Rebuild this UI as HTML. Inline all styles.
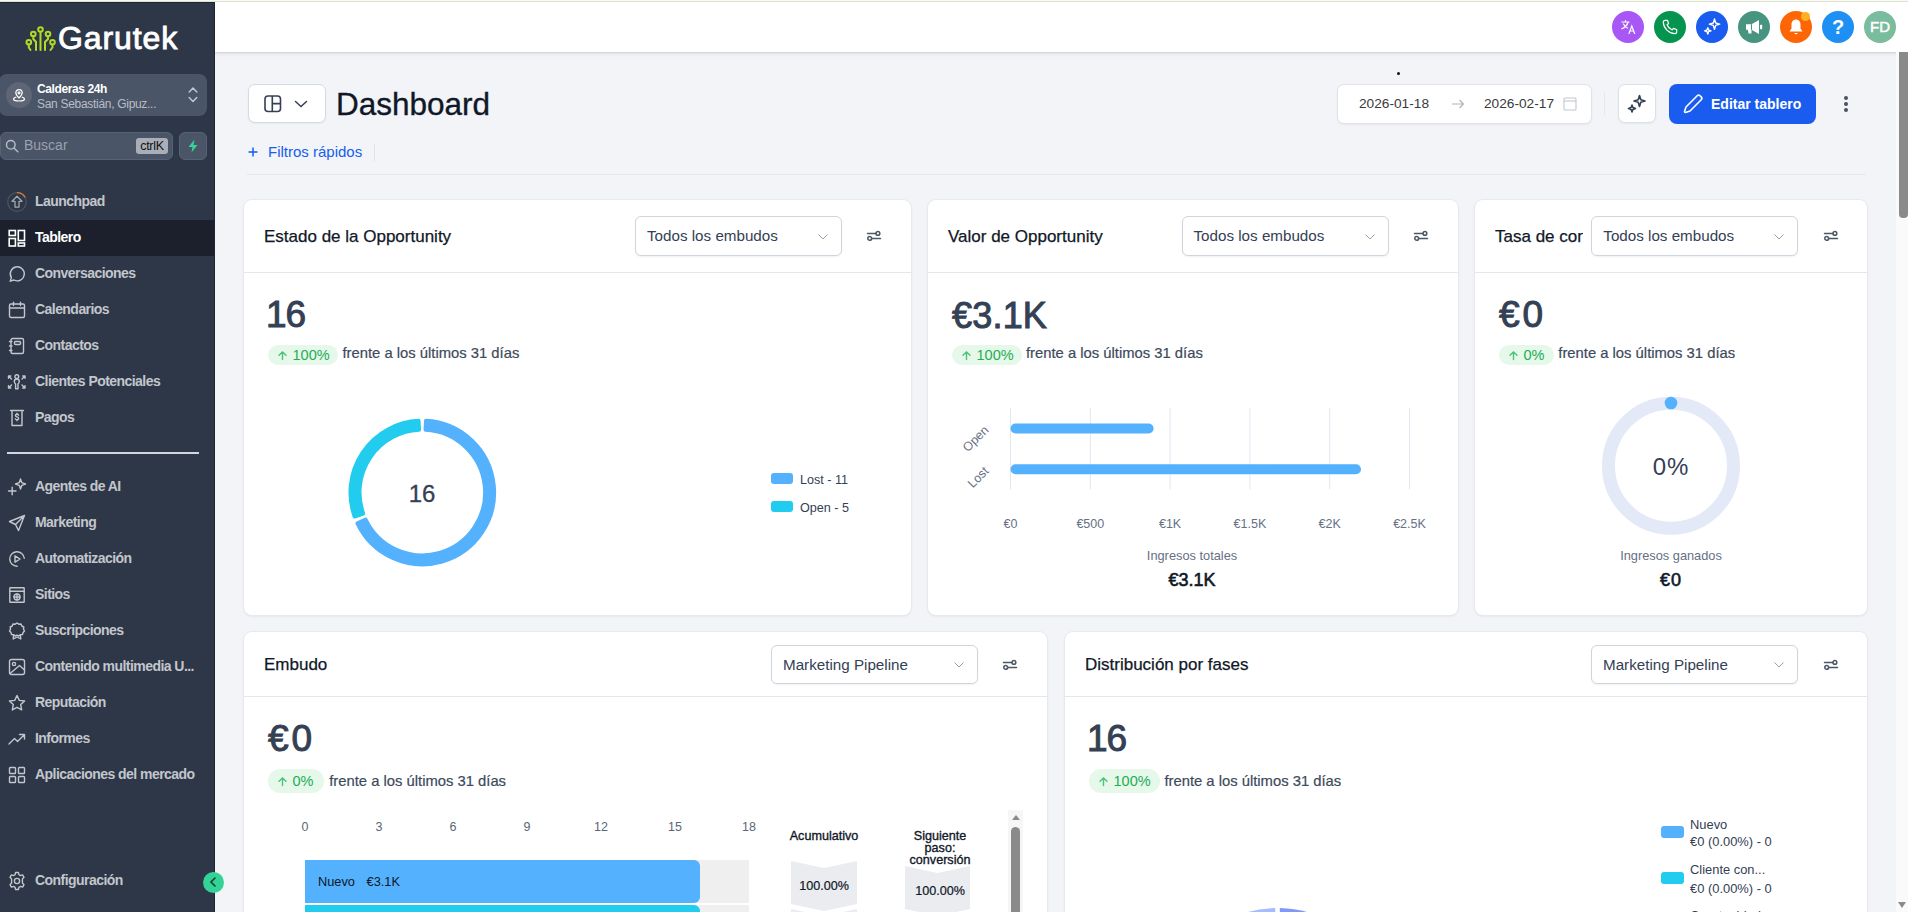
<!DOCTYPE html>
<html><head><meta charset="utf-8">
<style>
*{box-sizing:border-box;margin:0;padding:0}
html,body{width:1908px;height:912px;overflow:hidden;background:#f2f4f7;font-family:"Liberation Sans",sans-serif;color:#101828}
.a{position:absolute}
svg{position:absolute;overflow:visible}
#topline{left:0;top:0;width:1908px;height:2px;background:linear-gradient(#f8fcf0 0,#f8fcf0 1px,#dfe3d5 1px,#dfe3d5 2px)}
#side{left:0;top:2px;width:215px;height:910px;background:#2d3748;border-right:1px solid #1f2636;border-top:1px solid #1e2535}
#hdr{left:215px;top:2px;width:1693px;height:50px;background:#fff;box-shadow:0 1px 1px rgba(16,24,40,.08),0 2px 4px rgba(16,24,40,.08)}
.nav{position:absolute;left:0;width:214px;height:36px;color:#c3c6cc;font-weight:bold;font-size:14px;letter-spacing:-0.55px;line-height:36px}
.nav span{position:absolute;left:35px;top:-0.9px;white-space:nowrap}
.nav svg{left:8px;top:9px}
.nav.act{background:#1b202c;color:#fff}
.card{position:absolute;background:#fff;border-radius:8px;box-shadow:0 0 0 1px #e7e9ee,0 1px 3px rgba(16,24,40,.10)}
.chd{position:absolute;left:0;right:0;top:0;border-bottom:1px solid #e4e7ec}
.ctitle{position:absolute;left:20px;font-size:17px;color:#101828;white-space:nowrap;line-height:20px;-webkit-text-stroke:0.25px #101828}
.dd{position:absolute;height:40px;width:207px;border:1px solid #d0d5dd;border-radius:6px;background:#fff;box-shadow:0 1px 2px rgba(16,24,40,.06)}
.dd span{position:absolute;left:11px;top:0;line-height:38px;font-size:15.2px;color:#344054;white-space:nowrap}
.dd svg{right:13px;top:15px}
.flt{position:absolute}
.big{position:absolute;left:24px;font-size:37px;font-weight:normal;-webkit-text-stroke:1px #344054;color:#344054;line-height:40px;white-space:nowrap}
.badge{position:absolute;left:24px;height:20px;border-radius:10px;background:#e6f8ea;color:#22ad55;font-size:14.5px;line-height:20px;white-space:nowrap}
.badge svg{left:9px;top:5px}
.badge span{position:absolute;left:23px;top:0}
.vs{position:absolute;font-size:14.8px;color:#3d4a5c;-webkit-text-stroke:0.2px #3d4a5c;white-space:nowrap;line-height:20px}
.t13{position:absolute;font-size:13px;color:#667085;white-space:nowrap;line-height:16px}
</style></head>
<body>
<div id="topline" class="a"></div>
<div id="side" class="a">
</div>
<!-- logo -->
<svg width="32" height="26" viewBox="0 0 32 26" style="left:26px;top:26px">
<g stroke="#afdb24" stroke-width="2" fill="none" stroke-linecap="round">
<circle cx="14.5" cy="3.5" r="2.3"/><path d="M14.5 5.8 V24"/>
<circle cx="7.3" cy="8" r="2.3"/><path d="M7.3 10.3 V13 L10 16 V24"/>
<circle cx="22" cy="8" r="2.3"/><path d="M22 10.3 V13 L19 16 V24"/>
<circle cx="2.8" cy="16.3" r="2.3"/><path d="M2.8 18.6 V21.5 L4.5 24"/>
<circle cx="26.5" cy="16.3" r="2.3"/><path d="M26.5 18.6 V21.5 L24.5 24"/>
</g></svg>
<div class="a" style="left:58px;top:20px;font-size:32px;line-height:36px;color:#fff;letter-spacing:0.9px;-webkit-text-stroke:0.9px #fff;white-space:nowrap">Garutek</div>
<!-- location -->
<div class="a" style="left:-1px;top:74px;width:208px;height:42px;background:#4a5568;border-radius:8px"></div>
<div class="a" style="left:6px;top:82px;width:26px;height:26px;border-radius:13px;background:#5e6676"></div>
<svg width="14" height="14" viewBox="0 0 14 14" style="left:12px;top:88px"><g stroke="#fff" stroke-width="1.2" fill="none"><path d="M7 10 C5 8 3.8 6.5 3.8 4.8 A3.2 3.2 0 0 1 10.2 4.8 C10.2 6.5 9 8 7 10 Z"/><circle cx="7" cy="4.8" r="1"/><path d="M4.3 9 C2.5 9.5 1.5 10.2 1.5 11 C1.5 12.2 4 13 7 13 C10 13 12.5 12.2 12.5 11 C12.5 10.2 11.5 9.5 9.7 9"/></g></svg>
<div class="a" style="left:37px;top:82px;font-size:12px;font-weight:bold;color:#fff;letter-spacing:-0.4px;line-height:14px;white-space:nowrap">Calderas 24h</div>
<div class="a" style="left:37px;top:96.5px;font-size:12px;color:#b9bdc6;letter-spacing:-0.3px;line-height:14px;white-space:nowrap">San Sebastián, Gipuz...</div>
<svg width="10" height="17" viewBox="0 0 10 17" style="left:188px;top:86px"><path d="M1.2 6 L5 2 L8.8 6 M1.2 11.5 L5 15.5 L8.8 11.5" stroke="#c3c6cc" stroke-width="1.5" fill="none" stroke-linecap="round" stroke-linejoin="round"/></svg>
<!-- search -->
<div class="a" style="left:0;top:132px;width:173px;height:28px;background:#4a5568;border:1px solid #586275;border-radius:6px"></div>
<svg width="14" height="14" viewBox="0 0 14 14" style="left:5px;top:139px"><g stroke="#b9bdc6" stroke-width="1.4" fill="none" stroke-linecap="round"><circle cx="5.8" cy="5.8" r="4.3"/><path d="M9 9 L12.8 12.8"/></g></svg>
<div class="a" style="left:24px;top:137px;font-size:14px;color:#9ba1ad;line-height:17px;white-space:nowrap">Buscar</div>
<div class="a" style="left:136px;top:138px;width:32px;height:16px;background:#a9aeb8;border-radius:3px;font-size:12.5px;color:#111;line-height:16px;text-align:center;letter-spacing:-0.3px">ctrlK</div>
<div class="a" style="left:179px;top:132px;width:28px;height:28px;background:#4a5568;border:1px solid #586275;border-radius:6px"></div>
<svg width="12" height="14" viewBox="0 0 12 14" style="left:187px;top:139px"><path d="M7.5 0.5 L1.5 8 H5.5 L4.5 13.5 L10.5 6 H6.5 Z" fill="#37d399"/></svg>
<div class="a" style="left:7px;top:452px;width:192px;height:1.5px;background:#d3d6dc"></div>
<div class="nav" style="top:184px"><svg width="20" height="20" viewBox="0 0 20 20" style="left:7px;top:8px"><circle cx="10" cy="10" r="9.3" stroke="#4d5566" stroke-width="1.2" fill="none"/><path d="M10 0.7 A9.3 9.3 0 0 1 18.1 5.4" stroke="#e0792a" stroke-width="1.3" fill="none"/><path d="M10 4.3 L15 9.3 H12 V15.2 H8 V9.3 H5 Z" stroke="#a3a7b0" stroke-width="1.3" fill="none" stroke-linejoin="round"/></svg><span>Launchpad</span></div>
<div class="nav act" style="top:220px"><svg width="18" height="18" viewBox="0 0 18 18"><g stroke="#fff" stroke-width="1.6" fill="none"><rect x="1.2" y="1.5" width="6.2" height="5"/><rect x="10.3" y="1.5" width="6.2" height="10"/><rect x="1.2" y="9.5" width="6.2" height="7.5"/><rect x="10.3" y="14" width="6.2" height="3"/></g></svg><span>Tablero</span></div>
<div class="nav" style="top:256px"><svg width="18" height="18" viewBox="0 0 18 18"><path d="M2.2 16.2 L3.4 12.6 A7 7 0 1 1 6 15 Z" stroke="#c3c6cc" stroke-width="1.4" fill="none" stroke-linecap="round" stroke-linejoin="round"/></svg><span>Conversaciones</span></div>
<div class="nav" style="top:292px"><svg width="18" height="18" viewBox="0 0 18 18"><g stroke="#c3c6cc" stroke-width="1.4" fill="none" stroke-linecap="round" stroke-linejoin="round"><rect x="1.5" y="3" width="15" height="13.5" rx="1.5"/><path d="M1.5 7 H16.5 M5.5 1.3 V4.5 M12.5 1.3 V4.5"/></g></svg><span>Calendarios</span></div>
<div class="nav" style="top:328px"><svg width="18" height="18" viewBox="0 0 18 18"><g stroke="#c3c6cc" stroke-width="1.4" fill="none" stroke-linecap="round" stroke-linejoin="round"><rect x="3" y="1.5" width="12.5" height="15" rx="1.5"/><rect x="6.5" y="4.5" width="6" height="3" rx="1"/><path d="M1.5 4.5 H4 M1.5 9 H4 M1.5 13.5 H4"/></g></svg><span>Contactos</span></div>
<div class="nav" style="top:364px"><svg width="18" height="18" viewBox="0 0 18 18"><g transform="translate(0 1)" stroke="#c3c6cc" stroke-width="1.4" fill="none" stroke-linecap="round" stroke-linejoin="round"><circle cx="8.8" cy="2.6" r="1.9"/><path d="M8.8 5 C7.2 5 6.3 6.2 6.3 7.6 C6.3 8.8 7.1 9.6 7.6 10 V14.8 H10 V10 C10.5 9.6 11.3 8.8 11.3 7.6 C11.3 6.2 10.4 5 8.8 5 Z"/><path d="M0.5 2 L3.5 5 M0.5 2 H2.8 M0.5 2 V4.3 M17 2 L14 5 M17 2 H14.7 M17 2 V4.3 M0.5 14 L3.5 11 M0.5 14 H2.8 M0.5 14 V11.7 M17 14 L14 11 M17 14 H14.7 M17 14 V11.7"/></g></svg><span>Clientes Potenciales</span></div>
<div class="nav" style="top:400px"><svg width="18" height="18" viewBox="0 0 18 18"><g stroke="#c3c6cc" stroke-width="1.4" fill="none" stroke-linecap="round" stroke-linejoin="round"><path d="M2.5 1.5 H15.5 M4 1.5 V16.5 H14 V1.5"/><path d="M10.6 6.2 C10.2 5.5 9.6 5.3 9 5.3 C8 5.3 7.4 5.9 7.4 6.6 C7.4 8.4 10.6 7.5 10.6 9.4 C10.6 10.2 9.9 10.8 9 10.8 C8.2 10.8 7.6 10.4 7.3 9.8 M9 4.3 V5.3 M9 10.8 V11.8"/></g></svg><span>Pagos</span></div>
<div class="nav" style="top:469px"><svg width="20" height="20" viewBox="0 0 20 20" style="left:7px;top:8px"><g stroke="#c3c6cc" stroke-width="1.4" fill="none" stroke-linecap="round" stroke-linejoin="round"><path d="M1.5 14 H9 M5.2 10.2 V17.8"/><path d="M13.5 2 L14.8 5.7 L18.5 7 L14.8 8.3 L13.5 12 L12.2 8.3 L8.5 7 L12.2 5.7 Z"/></g></svg><span>Agentes de AI</span></div>
<div class="nav" style="top:505px"><svg width="18" height="18" viewBox="0 0 18 18"><path d="M16.5 1.5 L1.5 7.5 L7.5 10.5 L10.5 16.5 Z M16.5 1.5 L7.5 10.5" stroke="#c3c6cc" stroke-width="1.4" fill="none" stroke-linecap="round" stroke-linejoin="round"/></svg><span>Marketing</span></div>
<div class="nav" style="top:541px"><svg width="18" height="18" viewBox="0 0 18 18"><g stroke="#c3c6cc" stroke-width="1.4" fill="none" stroke-linecap="round" stroke-linejoin="round"><path d="M16.3 8.3 A7.3 7.3 0 1 0 9.2 16.3"/><path d="M7 5.8 L12 9 L7 12.2 Z"/></g></svg><span>Automatización</span></div>
<div class="nav" style="top:577px"><svg width="18" height="18" viewBox="0 0 18 18"><g stroke="#c3c6cc" stroke-width="1.4" fill="none" stroke-linecap="round" stroke-linejoin="round"><rect x="1.8" y="1.8" width="14.4" height="14.4" rx="0.5"/><path d="M1.8 5.2 H16.2"/><circle cx="9" cy="11" r="3"/><path d="M6 11 H12 M9 8 V14"/></g></svg><span>Sitios</span></div>
<div class="nav" style="top:613px"><svg width="18" height="18" viewBox="0 0 18 18"><g stroke="#c3c6cc" stroke-width="1.4" fill="none" stroke-linecap="round" stroke-linejoin="round"><path d="M9 1 L10.8 2.2 L13 2 L13.8 4 L15.8 5 L15.5 7.2 L16.5 9 L15 10.6 L14.5 12.5 L12.3 12.8 L10.8 14 L9 13.2 L7.2 14 L5.7 12.8 L3.5 12.5 L3 10.6 L1.5 9 L2.5 7.2 L2.2 5 L4.2 4 L5 2 L7.2 2.2 Z"/><path d="M5.7 12.8 L5.2 17 L9 15 L12.8 17 L12.3 12.8"/></g></svg><span>Suscripciones</span></div>
<div class="nav" style="top:649px"><svg width="18" height="18" viewBox="0 0 18 18"><g stroke="#c3c6cc" stroke-width="1.4" fill="none" stroke-linecap="round" stroke-linejoin="round"><rect x="1.5" y="1.5" width="15" height="15" rx="2"/><circle cx="6" cy="6" r="1.6"/><path d="M2 15.5 L11.5 7.5 L16.5 12"/></g></svg><span>Contenido multimedia U...</span></div>
<div class="nav" style="top:685px"><svg width="18" height="18" viewBox="0 0 18 18"><path d="M9 1.5 L11.3 6.4 L16.6 7 L12.7 10.6 L13.7 15.9 L9 13.3 L4.3 15.9 L5.3 10.6 L1.4 7 L6.7 6.4 Z" stroke="#c3c6cc" stroke-width="1.4" fill="none" stroke-linecap="round" stroke-linejoin="round"/></svg><span>Reputación</span></div>
<div class="nav" style="top:721px"><svg width="18" height="18" viewBox="0 0 18 18"><g stroke="#c3c6cc" stroke-width="1.4" fill="none" stroke-linecap="round" stroke-linejoin="round"><path d="M1 14 L6.5 8.5 L9.5 11.5 L16.5 4.5 M11.5 4.5 H16.5 V9"/></g></svg><span>Informes</span></div>
<div class="nav" style="top:757px"><svg width="18" height="18" viewBox="0 0 18 18"><g stroke="#c3c6cc" stroke-width="1.4" fill="none" stroke-linecap="round" stroke-linejoin="round"><rect x="1.5" y="1.5" width="6" height="6" rx="0.8"/><rect x="10.5" y="1.5" width="6" height="6" rx="0.8"/><rect x="1.5" y="10.5" width="6" height="6" rx="0.8"/><rect x="10.5" y="10.5" width="6" height="6" rx="0.8"/></g></svg><span>Aplicaciones del mercado</span></div>
<div class="nav" style="top:863px"><svg width="20" height="20" viewBox="0 0 20 20" style="left:7px;top:8px"><g stroke="#c3c6cc" stroke-width="1.4" fill="none" stroke-linecap="round" stroke-linejoin="round"><path d="M8.6 1.5 H11.4 L11.9 3.7 L13.5 4.6 L15.6 3.9 L17 6.3 L15.4 7.9 V9.8 V12.1 L17 13.7 L15.6 16.1 L13.5 15.4 L11.9 16.3 L11.4 18.5 H8.6 L8.1 16.3 L6.5 15.4 L4.4 16.1 L3 13.7 L4.6 12.1 V7.9 L3 6.3 L4.4 3.9 L6.5 4.6 L8.1 3.7 Z"/><circle cx="10" cy="10" r="2.6"/></g></svg><span>Configuración</span></div>

<div class="a" style="left:203px;top:872px;width:21px;height:21px;border-radius:11px;background:#33d296"></div>
<svg width="8" height="10" viewBox="0 0 8 10" style="left:209px;top:877px"><path d="M6 1 L2 5 L6 9" stroke="#1b3a30" stroke-width="1.6" fill="none" stroke-linecap="round"/></svg>

<!-- header -->
<div id="hdr" class="a"></div>
<div class="a" style="left:1896px;top:52px;width:12px;height:860px;background:#fafafa"></div>
<div class="a" style="left:1899px;top:52px;width:9px;height:166px;background:#8a8a8a;border-radius:0 0 4px 4px"></div>
<svg width="10" height="8" viewBox="0 0 10 8" style="left:1897px;top:901px"><path d="M1 1 H9 L5 7 Z" fill="#8a8a8a"/></svg>
<!-- header icons -->
<div class="a" style="left:1612px;top:11px;width:32px;height:32px;border-radius:16px;background:#a857f6"></div>
<div class="a" style="left:1654px;top:11px;width:32px;height:32px;border-radius:16px;background:#05944f"></div>
<div class="a" style="left:1696px;top:11px;width:32px;height:32px;border-radius:16px;background:#1a5cf0"></div>
<div class="a" style="left:1738px;top:11px;width:32px;height:32px;border-radius:16px;background:#479580"></div>
<div class="a" style="left:1780px;top:11px;width:32px;height:32px;border-radius:16px;background:#fe6505"></div>
<div class="a" style="left:1822px;top:11px;width:32px;height:32px;border-radius:16px;background:#1e8ff3"></div>
<div class="a" style="left:1864px;top:11px;width:32px;height:32px;border-radius:16px;background:#79bc9e"></div>
<div class="a" style="left:1801px;top:12px;width:9px;height:9px;border-radius:5px;background:#fdb022"></div>
<!-- translate -->
<svg width="16" height="14" viewBox="0 0 16 14" style="left:1621px;top:20px"><g stroke="#fff" stroke-width="1.2" fill="none" stroke-linecap="round"><path d="M0.8 2 H8 M4.5 0.5 V2 M7 2 C6.3 5 4 7.5 0.8 8.8 M2.5 4 C3.5 6 5 7.3 6.5 8"/><path d="M8 13.5 L10.8 6 L13.6 13.5 M9 11 H12.6"/></g></svg>
<!-- phone -->
<svg width="16" height="16" viewBox="0 0 16 16" style="left:1662px;top:19px"><path d="M3.2 1.3 L5.5 1.3 L6.6 4.6 L5 5.8 C5.8 7.8 8.2 10.2 10.2 11 L11.4 9.4 L14.7 10.5 V12.8 C14.7 13.8 13.9 14.7 12.8 14.7 C6.8 14.4 1.6 9.2 1.3 3.2 C1.3 2.1 2.2 1.3 3.2 1.3 Z" stroke="#fff" stroke-width="1.2" fill="none" stroke-linejoin="round"/></svg>
<!-- sparkle -->
<svg width="18" height="18" viewBox="0 0 18 18" style="left:1703px;top:18px"><g stroke="#fff" stroke-width="1.4" fill="none" stroke-linejoin="round"><path d="M11.5 1 L12.7 5 L16.7 6.2 L12.7 7.4 L11.5 11.4 L10.3 7.4 L6.3 6.2 L10.3 5 Z"/><path d="M4.8 9.6 L5.6 12 L8 12.8 L5.6 13.6 L4.8 16 L4 13.6 L1.6 12.8 L4 12 Z"/></g></svg>
<!-- megaphone -->
<svg width="18" height="16" viewBox="0 0 18 16" style="left:1745px;top:19px"><path d="M1 5.2 H6.5 L14 1 V15 L6.5 10.8 V14.5 H3.5 L2.8 10.8 H1 Z" fill="#fff"/><rect x="15" y="5.8" width="2.2" height="4.4" rx="0.6" fill="#fff"/><path d="M6.5 5.2 V10.8" stroke="#479580" stroke-width="1"/></svg>
<!-- bell -->
<svg width="16" height="18" viewBox="0 0 16 18" style="left:1788px;top:18px"><path d="M8 1.5 C5.2 1.5 3.5 3.7 3.5 6.5 V10.5 L1.5 13.5 H14.5 L12.5 10.5 V6.5 C12.5 3.7 10.8 1.5 8 1.5 Z" fill="#fff"/><path d="M6.3 15 A1.8 1.8 0 0 0 9.7 15 Z" fill="#fff"/></svg>
<div class="a" style="left:1822px;top:15px;width:32px;height:24px;font-size:20px;font-weight:bold;color:#fff;text-align:center;line-height:24px">?</div>
<div class="a" style="left:1864px;top:17px;width:32px;height:20px;font-size:15px;-webkit-text-stroke:0.5px #fff;color:#fff;text-align:center;line-height:20px;letter-spacing:0px">FD</div>
<!-- page header -->
<div class="a" style="left:248px;top:84px;width:78px;height:39px;background:#fff;border:1px solid #d5d9e0;border-radius:7px;box-shadow:0 1px 2px rgba(16,24,40,.05)"></div>
<svg width="18" height="18" viewBox="0 0 18 18" style="left:264px;top:95px"><g stroke="#344054" stroke-width="1.6" fill="none"><rect x="1" y="1" width="15.5" height="15.5" rx="3"/><path d="M8.3 1 V16.5 M8.3 8.6 H16.5"/></g></svg>
<svg width="14" height="8" viewBox="0 0 14 8" style="left:294px;top:100px"><path d="M1.5 1.5 L7 6.5 L12.5 1.5" stroke="#344054" stroke-width="1.5" fill="none" stroke-linecap="round"/></svg>
<div class="a" style="left:336px;top:84px;font-size:31.5px;line-height:40px;color:#101828;-webkit-text-stroke:0.35px #101828;white-space:nowrap">Dashboard</div>
<svg width="10" height="10" viewBox="0 0 10 10" style="left:248px;top:147px"><path d="M5 0.5 V9.5 M0.5 5 H9.5" stroke="#155eef" stroke-width="1.5"/></svg>
<div class="a" style="left:268px;top:143px;font-size:15px;line-height:18px;color:#155eef;white-space:nowrap">Filtros rápidos</div>
<div class="a" style="left:374px;top:144px;width:1px;height:17px;background:#dfe2e7"></div>
<div class="a" style="left:247px;top:174px;width:1619px;height:1px;background:#e4e7ec"></div>
<div class="a" style="left:1397px;top:72px;width:3px;height:3px;border-radius:2px;background:#111"></div>
<!-- date range -->
<div class="a" style="left:1336.5px;top:84px;width:255px;height:39.5px;background:#fff;border:1px solid #e0e3e8;border-radius:7px;box-shadow:0 1px 2px rgba(16,24,40,.05)"></div>
<div class="a" style="left:1359px;top:95px;font-size:13.7px;line-height:17px;color:#3a3a3a;white-space:nowrap">2026-01-18</div>
<svg width="14" height="10" viewBox="0 0 14 10" style="left:1451px;top:99px"><path d="M1 5 H12.5 M8.5 1 L12.5 5 L8.5 9" stroke="#b0b3b8" stroke-width="1.2" fill="none"/></svg>
<div class="a" style="left:1484px;top:95px;font-size:13.7px;line-height:17px;color:#3a3a3a;white-space:nowrap">2026-02-17</div>
<svg width="14" height="14" viewBox="0 0 14 14" style="left:1563px;top:97px"><g stroke="#c2c5ca" stroke-width="1.1" fill="none"><rect x="1" y="1" width="12" height="12" rx="1"/><path d="M1 4 H13"/></g></svg>
<div class="a" style="left:1604px;top:92px;width:1px;height:23px;background:#e4e7ec"></div>
<div class="a" style="left:1618px;top:84px;width:38px;height:39px;background:#fff;border:1px solid #dcdfe4;border-radius:7px;box-shadow:0 1px 2px rgba(16,24,40,.05)"></div>
<svg width="20" height="20" viewBox="0 0 20 20" style="left:1627px;top:94px"><g stroke="#344054" stroke-width="1.6" fill="none" stroke-linejoin="round"><path d="M12.5 1.5 L13.8 5.7 L18 7 L13.8 8.3 L12.5 12.5 L11.2 8.3 L7 7 L11.2 5.7 Z"/><path d="M5 11 L5.9 13.6 L8.5 14.5 L5.9 15.4 L5 18 L4.1 15.4 L1.5 14.5 L4.1 13.6 Z"/></g></svg>
<div class="a" style="left:1669px;top:84px;width:147px;height:40px;background:#1a5cf0;border-radius:8px"></div>
<svg width="20" height="20" viewBox="0 0 20 20" style="left:1683px;top:94px"><path d="M14.2 1.8 C15 1 16.3 1 17.1 1.8 L18.2 2.9 C19 3.7 19 5 18.2 5.8 L7 17 L2.5 18.5 C1.9 18.7 1.3 18.1 1.5 17.5 L3 13 Z" stroke="#fff" stroke-width="1.6" fill="none" stroke-linejoin="round"/></svg>
<div class="a" style="left:1711px;top:96px;font-size:14px;font-weight:bold;line-height:17px;color:#fff;white-space:nowrap">Editar tablero</div>
<div class="a" style="left:1844px;top:96px;width:4px;height:4px;border-radius:2px;background:#4a5160"></div>
<div class="a" style="left:1844px;top:102px;width:4px;height:4px;border-radius:2px;background:#4a5160"></div>
<div class="a" style="left:1844px;top:108px;width:4px;height:4px;border-radius:2px;background:#4a5160"></div>
<div class="card" style="left:244px;top:200px;width:667px;height:415px">
<div class="chd" style="height:73px"></div>
<div class="ctitle" style="top:26.5px">Estado de la Opportunity</div>
<div class="dd" style="left:391px;top:16px;height:40px"><span>Todos los embudos</span><svg width="10" height="6" viewBox="0 0 10 6" style="top:16.5px"><path d="M0.5 0.5 L5 5 L9.5 0.5" stroke="#98a2b3" stroke-width="1" fill="none"/></svg></div>
<svg width="14" height="10" viewBox="0 0 14 10" style="left:623px;top:31px"><g stroke="#4b5866" stroke-width="1.5" fill="none" stroke-linecap="round"><path d="M0.5 2.4 H8.8 M5.2 7.4 H13.5"/><circle cx="10.9" cy="2.4" r="1.9"/><circle cx="2.7" cy="7.4" r="1.9"/></g></svg>
<div class="big" style="top:95px;left:22px;letter-spacing:-1px">16</div>
<div class="badge" style="left:24px;top:145px;width:70px;height:20px;line-height:20px;border-radius:10.0px"><svg width="9" height="9" viewBox="0 0 9 9" style="left:10px;top:6.0px"><path d="M4.5 8.5 V1 M1 4.3 L4.5 1 L8 4.3" stroke="#4cc27a" stroke-width="1.4" fill="none" stroke-linecap="round"/></svg><span style="left:24.5px">100%</span></div>
<div class="vs" style="left:98.5px;top:143px">frente a los últimos 31 días</div>
<svg width="667" height="415" style="left:0;top:0"><g stroke-width="4.0" stroke-linejoin="round"><path d="M182.01 220.80 A71.8 71.8 0 1 1 113.47 323.37 L121.60 319.50 A62.8 62.8 0 1 0 181.54 229.78 Z" fill="#53b1fd" stroke="#53b1fd"/><path d="M110.63 316.51 A71.8 71.8 0 0 1 174.59 220.80 L175.06 229.78 A62.8 62.8 0 0 0 119.12 313.50 Z" fill="#22ccee" stroke="#22ccee"/></g></svg>
<div class="a" style="left:128px;top:279.5px;width:100px;text-align:center;font-size:24px;-webkit-text-stroke:0.3px #344054;line-height:28px;color:#344054">16</div>
<div class="a" style="left:527px;top:273px;width:22px;height:11px;border-radius:3px;background:#53b1fd"></div>
<div class="t13" style="left:556px;top:271.6px;font-size:12.6px;color:#344054">Lost - 11</div>
<div class="a" style="left:527px;top:301px;width:22px;height:11px;border-radius:3px;background:#22ccee"></div>
<div class="t13" style="left:556px;top:299.5px;font-size:12.6px;color:#344054">Open - 5</div>
</div>
<div class="card" style="left:928px;top:200px;width:529.5px;height:415px">
<div class="chd" style="height:73px"></div>
<div class="ctitle" style="top:26.5px">Valor de Opportunity</div>
<div class="dd" style="left:253.5px;top:16px;height:40px"><span>Todos los embudos</span><svg width="10" height="6" viewBox="0 0 10 6" style="top:16.5px"><path d="M0.5 0.5 L5 5 L9.5 0.5" stroke="#98a2b3" stroke-width="1" fill="none"/></svg></div>
<svg width="14" height="10" viewBox="0 0 14 10" style="left:486px;top:31px"><g stroke="#4b5866" stroke-width="1.5" fill="none" stroke-linecap="round"><path d="M0.5 2.4 H8.8 M5.2 7.4 H13.5"/><circle cx="10.9" cy="2.4" r="1.9"/><circle cx="2.7" cy="7.4" r="1.9"/></g></svg>
<div class="big" style="top:95.5px;letter-spacing:0.2px;font-size:36px">€3.1K</div>
<div class="badge" style="left:24px;top:145px;width:70px;height:20px;line-height:20px;border-radius:10.0px"><svg width="9" height="9" viewBox="0 0 9 9" style="left:10px;top:6.0px"><path d="M4.5 8.5 V1 M1 4.3 L4.5 1 L8 4.3" stroke="#4cc27a" stroke-width="1.4" fill="none" stroke-linecap="round"/></svg><span style="left:24.5px">100%</span></div>
<div class="vs" style="left:98px;top:143px">frente a los últimos 31 días</div>
<svg width="529.5" height="415" style="left:0;top:0"><line x1="82.5" y1="208" x2="82.5" y2="289.5" stroke="#e4e7f2" stroke-width="1"/><line x1="162.3" y1="208" x2="162.3" y2="289.5" stroke="#e4e7f2" stroke-width="1"/><line x1="242.1" y1="208" x2="242.1" y2="289.5" stroke="#e4e7f2" stroke-width="1"/><line x1="321.9" y1="208" x2="321.9" y2="289.5" stroke="#e4e7f2" stroke-width="1"/><line x1="401.7" y1="208" x2="401.7" y2="289.5" stroke="#e4e7f2" stroke-width="1"/><line x1="481.5" y1="208" x2="481.5" y2="289.5" stroke="#e4e7f2" stroke-width="1"/><line x1="87.5" y1="228.5" x2="220.6" y2="228.5" stroke="#53b1fd" stroke-width="10" stroke-linecap="round"/><line x1="87.5" y1="269.3" x2="428" y2="269.3" stroke="#53b1fd" stroke-width="10" stroke-linecap="round"/></svg>
<div class="t13" style="left:42.5px;top:316px;width:80px;text-align:center;font-size:12.5px">€0</div>
<div class="t13" style="left:122.3px;top:316px;width:80px;text-align:center;font-size:12.5px">€500</div>
<div class="t13" style="left:202.1px;top:316px;width:80px;text-align:center;font-size:12.5px">€1K</div>
<div class="t13" style="left:281.9px;top:316px;width:80px;text-align:center;font-size:12.5px">€1.5K</div>
<div class="t13" style="left:361.7px;top:316px;width:80px;text-align:center;font-size:12.5px">€2K</div>
<div class="t13" style="left:441.5px;top:316px;width:80px;text-align:center;font-size:12.5px">€2.5K</div>
<div class="t13" style="right:471px;top:220px;transform-origin:100% 50%;transform:rotate(-45deg);font-size:12.5px">Open</div>
<div class="t13" style="right:471px;top:261px;transform-origin:100% 50%;transform:rotate(-45deg);font-size:12.5px">Lost</div>
<div class="t13" style="left:164px;top:348px;width:200px;text-align:center;font-size:12.8px">Ingresos totales</div>
<div class="a" style="left:164px;top:370px;width:200px;text-align:center;font-size:18px;-webkit-text-stroke:0.6px #101828;line-height:20px;color:#101828">€3.1K</div>
</div>
<div class="card" style="left:1475px;top:200px;width:392px;height:415px">
<div class="chd" style="height:73px"></div>
<div class="ctitle" style="top:26.5px;width:88px;overflow:hidden">Tasa de conversión</div>
<div class="dd" style="left:116.3px;top:16px;height:40px"><span>Todos los embudos</span><svg width="10" height="6" viewBox="0 0 10 6" style="top:16.5px"><path d="M0.5 0.5 L5 5 L9.5 0.5" stroke="#98a2b3" stroke-width="1" fill="none"/></svg></div>
<svg width="14" height="10" viewBox="0 0 14 10" style="left:349px;top:31px"><g stroke="#4b5866" stroke-width="1.5" fill="none" stroke-linecap="round"><path d="M0.5 2.4 H8.8 M5.2 7.4 H13.5"/><circle cx="10.9" cy="2.4" r="1.9"/><circle cx="2.7" cy="7.4" r="1.9"/></g></svg>
<div class="big" style="top:95px;letter-spacing:3px">€0</div>
<div class="badge" style="left:24px;top:145px;width:55px;height:20px;line-height:20px;border-radius:10.0px"><svg width="9" height="9" viewBox="0 0 9 9" style="left:10px;top:6.0px"><path d="M4.5 8.5 V1 M1 4.3 L4.5 1 L8 4.3" stroke="#4cc27a" stroke-width="1.4" fill="none" stroke-linecap="round"/></svg><span style="left:24.5px">0%</span></div>
<div class="vs" style="left:83.3px;top:143px">frente a los últimos 31 días</div>
<svg width="392" height="415" style="left:0;top:0"><circle cx="196" cy="265.7" r="62.5" stroke="#e4e9f7" stroke-width="13" fill="none"/><circle cx="196" cy="203" r="6.3" fill="#53b1fd"/></svg>
<div class="a" style="left:146px;top:253px;width:100px;text-align:center;font-size:24px;letter-spacing:1px;line-height:28px;color:#344054">0%</div>
<div class="t13" style="left:96px;top:348px;width:200px;text-align:center;font-size:12.8px">Ingresos ganados</div>
<div class="a" style="left:96px;top:370px;width:200px;text-align:center;font-size:18px;-webkit-text-stroke:0.6px #101828;letter-spacing:1px;line-height:20px;color:#101828">€0</div>
</div>
<div class="card" style="left:244px;top:632px;width:803px;height:400px">
<div class="chd" style="height:65px"></div>
<div class="ctitle" style="top:22.7px">Embudo</div>
<div class="dd" style="left:527px;top:13px;height:39px"><span>Marketing Pipeline</span><svg width="10" height="6" viewBox="0 0 10 6" style="top:16.0px"><path d="M0.5 0.5 L5 5 L9.5 0.5" stroke="#98a2b3" stroke-width="1" fill="none"/></svg></div>
<svg width="14" height="10" viewBox="0 0 14 10" style="left:759px;top:28px"><g stroke="#4b5866" stroke-width="1.5" fill="none" stroke-linecap="round"><path d="M0.5 2.4 H8.8 M5.2 7.4 H13.5"/><circle cx="10.9" cy="2.4" r="1.9"/><circle cx="2.7" cy="7.4" r="1.9"/></g></svg>
<div class="big" style="top:87px;letter-spacing:3px">€0</div>
<div class="badge" style="left:24px;top:137px;width:56px;height:24px;line-height:24px;border-radius:12.0px"><svg width="9" height="9" viewBox="0 0 9 9" style="left:10px;top:8.0px"><path d="M4.5 8.5 V1 M1 4.3 L4.5 1 L8 4.3" stroke="#4cc27a" stroke-width="1.4" fill="none" stroke-linecap="round"/></svg><span style="left:24.5px">0%</span></div>
<div class="vs" style="left:85.2px;top:139.2px">frente a los últimos 31 días</div>
<div class="t13" style="left:41px;top:187px;width:40px;text-align:center;font-size:12.5px;color:#5b6676">0</div>
<div class="t13" style="left:115px;top:187px;width:40px;text-align:center;font-size:12.5px;color:#5b6676">3</div>
<div class="t13" style="left:189px;top:187px;width:40px;text-align:center;font-size:12.5px;color:#5b6676">6</div>
<div class="t13" style="left:263px;top:187px;width:40px;text-align:center;font-size:12.5px;color:#5b6676">9</div>
<div class="t13" style="left:337px;top:187px;width:40px;text-align:center;font-size:12.5px;color:#5b6676">12</div>
<div class="t13" style="left:411px;top:187px;width:40px;text-align:center;font-size:12.5px;color:#5b6676">15</div>
<div class="t13" style="left:485px;top:187px;width:40px;text-align:center;font-size:12.5px;color:#5b6676">18</div>
<div class="a" style="left:61px;top:228px;width:444px;height:43px;background:#efefef"></div>
<div class="a" style="left:61px;top:228px;width:395px;height:43px;background:#53b1fd;border-radius:0 6px 6px 0"></div>
<div class="a" style="left:61px;top:273px;width:444px;height:43px;background:#efefef"></div>
<div class="a" style="left:61px;top:273px;width:395px;height:43px;background:#22ccee;border-radius:0 6px 6px 0"></div>
<div class="t13" style="left:74px;top:242px;font-size:12.8px;color:#101828;word-spacing:8px">Nuevo €3.1K</div>
<div class="a" style="left:530px;top:196.5px;width:100px;text-align:center;font-size:12.6px;-webkit-text-stroke:0.35px #101828;line-height:14px;color:#101828">Acumulativo</div>
<div class="a" style="left:646px;top:197.5px;width:100px;text-align:center;font-size:12.6px;-webkit-text-stroke:0.35px #101828;line-height:12px;color:#101828">Siguiente<br>paso:<br>conversión</div>
<svg width="200" height="120" style="left:540px;top:220px"><path d="M7 9 L40 16 L73 9 V52 L40 59 L7 52 Z" fill="#ebecf0"/><path d="M7 57 L40 64 L73 57 V120 H7 Z" fill="#ebecf0"/><path d="M121 14 L153.5 21 L186 14 V57 L153.5 64 L121 57 Z" fill="#ebecf0"/><path d="M121 62 L153.5 69 L186 62 V120 H121 Z" fill="#ebecf0"/></svg>
<div class="a" style="left:530px;top:247px;width:100px;text-align:center;font-size:12.6px;-webkit-text-stroke:0.2px #101828;line-height:14px;color:#101828">100.00%</div>
<div class="a" style="left:646px;top:252px;width:100px;text-align:center;font-size:12.6px;-webkit-text-stroke:0.2px #101828;line-height:14px;color:#101828">100.00%</div>
<div class="a" style="left:764px;top:178px;width:15px;height:240px;background:#f6f6f6"></div>
<svg width="10" height="7" viewBox="0 0 10 7" style="left:766.5px;top:182px"><path d="M1 6 H9 L5 1 Z" fill="#8a8a8a"/></svg>
<div class="a" style="left:767px;top:195px;width:9px;height:240px;background:#8a8a8a;border-radius:4.5px"></div>
</div>
<div class="card" style="left:1065px;top:632px;width:802px;height:400px">
<div class="chd" style="height:65px"></div>
<div class="ctitle" style="top:22.7px">Distribución por fases</div>
<div class="dd" style="left:526px;top:12.5px;height:39px"><span>Marketing Pipeline</span><svg width="10" height="6" viewBox="0 0 10 6" style="top:16.0px"><path d="M0.5 0.5 L5 5 L9.5 0.5" stroke="#98a2b3" stroke-width="1" fill="none"/></svg></div>
<svg width="14" height="10" viewBox="0 0 14 10" style="left:758.6px;top:28px"><g stroke="#4b5866" stroke-width="1.5" fill="none" stroke-linecap="round"><path d="M0.5 2.4 H8.8 M5.2 7.4 H13.5"/><circle cx="10.9" cy="2.4" r="1.9"/><circle cx="2.7" cy="7.4" r="1.9"/></g></svg>
<div class="big" style="top:87px;left:22px;letter-spacing:-1px">16</div>
<div class="badge" style="left:24px;top:137px;width:71px;height:24px;line-height:24px;border-radius:12.0px"><svg width="9" height="9" viewBox="0 0 9 9" style="left:10px;top:8.0px"><path d="M4.5 8.5 V1 M1 4.3 L4.5 1 L8 4.3" stroke="#4cc27a" stroke-width="1.4" fill="none" stroke-linecap="round"/></svg><span style="left:24.5px">100%</span></div>
<div class="vs" style="left:99.4px;top:139.2px">frente a los últimos 31 días</div>
<div class="a" style="left:596px;top:193.5px;width:23px;height:12px;border-radius:3px;background:#53b1fd"></div>
<div class="t13" style="left:625px;top:183.6px;font-size:12.9px;color:#344054;line-height:17.7px">Nuevo<br>€0 (0.00%) - 0</div>
<div class="a" style="left:596px;top:240px;width:23px;height:12px;border-radius:3px;background:#22ccee"></div>
<div class="t13" style="left:625px;top:229.4px;font-size:12.9px;color:#344054;line-height:18.2px">Cliente con...<br>€0 (0.00%) - 0</div>
<div class="t13" style="left:625px;top:275px;font-size:12.9px;color:#344054;line-height:18px">Oportunidad</div>
<svg width="802" height="400" style="left:0;top:0"><path d="M212.5 388 L115.51 332.00 A112 112 0 0 1 210.15 276.02 Z" fill="#a4bcfd"/></svg>
<svg width="802" height="400" style="left:0;top:0"><path d="M212.5 388 L214.85 276.02 A112 112 0 0 1 309.49 332.00 Z" fill="#8098f9"/></svg>
</div>

</body></html>
